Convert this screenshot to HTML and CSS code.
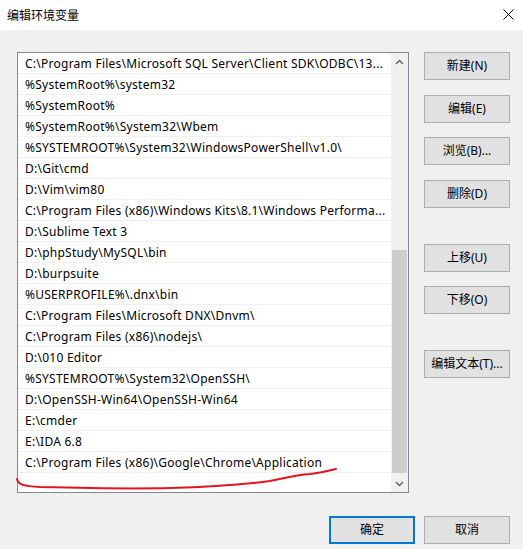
FILE: index.html
```html
<!DOCTYPE html>
<html lang="zh-CN">
<head>
<meta charset="utf-8">
<title>编辑环境变量</title>
<link rel="stylesheet" href="styles.css">
</head>
<body>
<div class="window">
  <div class="titlebar">
    <span class="title">编辑环境变量</span>
    <svg class="close" width="11" height="11" viewBox="0 0 11 11"><path d="M0.5 0.5 L10.5 10.5 M10.5 0.5 L0.5 10.5" stroke="#000" stroke-width="1" fill="none"/></svg>
  </div>
  <div class="content">
    <div class="main">
      <div class="listbox">
        <ul class="rows">
          <li>C:\Program Files\Microsoft SQL Server\Client SDK\ODBC\13...</li>
          <li>%SystemRoot%\system32</li>
          <li>%SystemRoot%</li>
          <li>%SystemRoot%\System32\Wbem</li>
          <li>%SYSTEMROOT%\System32\WindowsPowerShell\v1.0\</li>
          <li>D:\Git\cmd</li>
          <li>D:\Vim\vim80</li>
          <li>C:\Program Files (x86)\Windows Kits\8.1\Windows Performa...</li>
          <li>D:\Sublime Text 3</li>
          <li>D:\phpStudy\MySQL\bin</li>
          <li>D:\burpsuite</li>
          <li>%USERPROFILE%\.dnx\bin</li>
          <li>C:\Program Files\Microsoft DNX\Dnvm\</li>
          <li>C:\Program Files (x86)\nodejs\</li>
          <li>D:\010 Editor</li>
          <li>%SYSTEMROOT%\System32\OpenSSH\</li>
          <li>D:\OpenSSH-Win64\OpenSSH-Win64</li>
          <li>E:\cmder</li>
          <li>E:\IDA 6.8</li>
          <li>C:\Program Files (x86)\Google\Chrome\Application</li>
        </ul>
        <div class="scrollbar">
          <div class="arrow">
            <svg width="9" height="6" viewBox="0 0 9 6"><path d="M1 5 L4.5 1.5 L8 5" stroke="#606060" stroke-width="1.4" fill="none"/></svg>
          </div>
          <div class="track"><div class="thumb"></div></div>
          <div class="arrow">
            <svg width="9" height="6" viewBox="0 0 9 6"><path d="M1 1 L4.5 4.5 L8 1" stroke="#606060" stroke-width="1.4" fill="none"/></svg>
          </div>
        </div>
      </div>
      <div class="side">
        <button class="btn">新建(N)</button>
        <button class="btn">编辑(E)</button>
        <button class="btn">浏览(B)...</button>
        <button class="btn">删除(D)</button>
        <button class="btn">上移(U)</button>
        <button class="btn">下移(O)</button>
        <button class="btn">编辑文本(T)...</button>
      </div>
    </div>
    <div class="footer">
      <button class="btn default">确定</button>
      <button class="btn">取消</button>
    </div>
  </div>
  <svg class="scribble" width="523" height="549" viewBox="0 0 523 549">
    <path d="M17,479 C18,485 24,486 40,487 C80,488 130,489 170,488 C210,487 240,485 270,481 C285,478 295,475 310,474 C320,473 328,471 336,469" stroke="#e3141f" stroke-width="2" fill="none" stroke-linecap="round"/>
  </svg>
</div>
</body>
</html>
```
FILE: styles.css
```css
* { box-sizing: border-box; }
html, body { margin: 0; padding: 0; }
body {
  background: #f0f0f0;
  font-family: "Noto Sans", "Noto Sans CJK SC", sans-serif;
  font-size: 12px;
  color: #000;
}
.window {
  position: relative;
  width: 523px;
  height: 549px;
  background: #f0f0f0;
  overflow: hidden;
}
.titlebar {
  height: 30px;
  background: #fff;
  display: flex;
  align-items: center;
  justify-content: space-between;
  padding: 0 9px 0 7px;
}
.title {
  font-family: "Noto Sans CJK SC", sans-serif;
  font-size: 12px;
  line-height: 16px;
}
.close { display: block; margin-top: -1px; }
.content { padding: 22px 13px 0 17px; }
.main { display: flex; align-items: flex-start; }
.listbox {
  width: 392px;
  height: 441px;
  border: 1px solid #828790;
  background: #fff;
  display: flex;
}
.rows {
  list-style: none;
  margin: 0;
  padding: 0;
  flex: 1;
  overflow: hidden;
}
.rows li {
  height: 21px;
  line-height: 20px;
  padding-top: 1px;
  border-bottom: 1px solid #f0f0f0;
  padding-left: 7px;
  letter-spacing: 0.25px;
  white-space: nowrap;
  overflow: hidden;
}
.scrollbar {
  width: 17px;
  background: #f0f0f0;
  display: flex;
  flex-direction: column;
}
.arrow {
  height: 17px;
  display: flex;
  align-items: center;
  justify-content: center;
}
.arrow svg { display: block; }
.track { flex: 1; }
.thumb {
  margin: 180px 1px 0 1px;
  height: 223px;
  background: #cdcdcd;
}
.side {
  margin-left: 15px;
  display: flex;
  flex-direction: column;
}
.btn {
  width: 86px;
  height: 28px;
  padding: 0;
  background: #e1e1e1;
  border: 1px solid #adadad;
  font-family: "Noto Sans", "Noto Sans CJK SC", sans-serif;
  font-size: 12px;
  color: #000;
  line-height: 16px;
}
.side .btn:nth-child(2) { margin-top: 15px; }
.side .btn:nth-child(3) { margin-top: 14px; }
.side .btn:nth-child(4) { margin-top: 15px; }
.side .btn:nth-child(5) { margin-top: 36px; }
.side .btn:nth-child(6) { margin-top: 14px; }
.side .btn:nth-child(7) { margin-top: 36px; }
.footer {
  margin-top: 23px;
  display: flex;
  justify-content: flex-end;
  gap: 9px;
}
.btn.default { border: 2px solid #0078d7; }
.scribble {
  position: absolute;
  left: 0;
  top: 0;
  pointer-events: none;
}
```
